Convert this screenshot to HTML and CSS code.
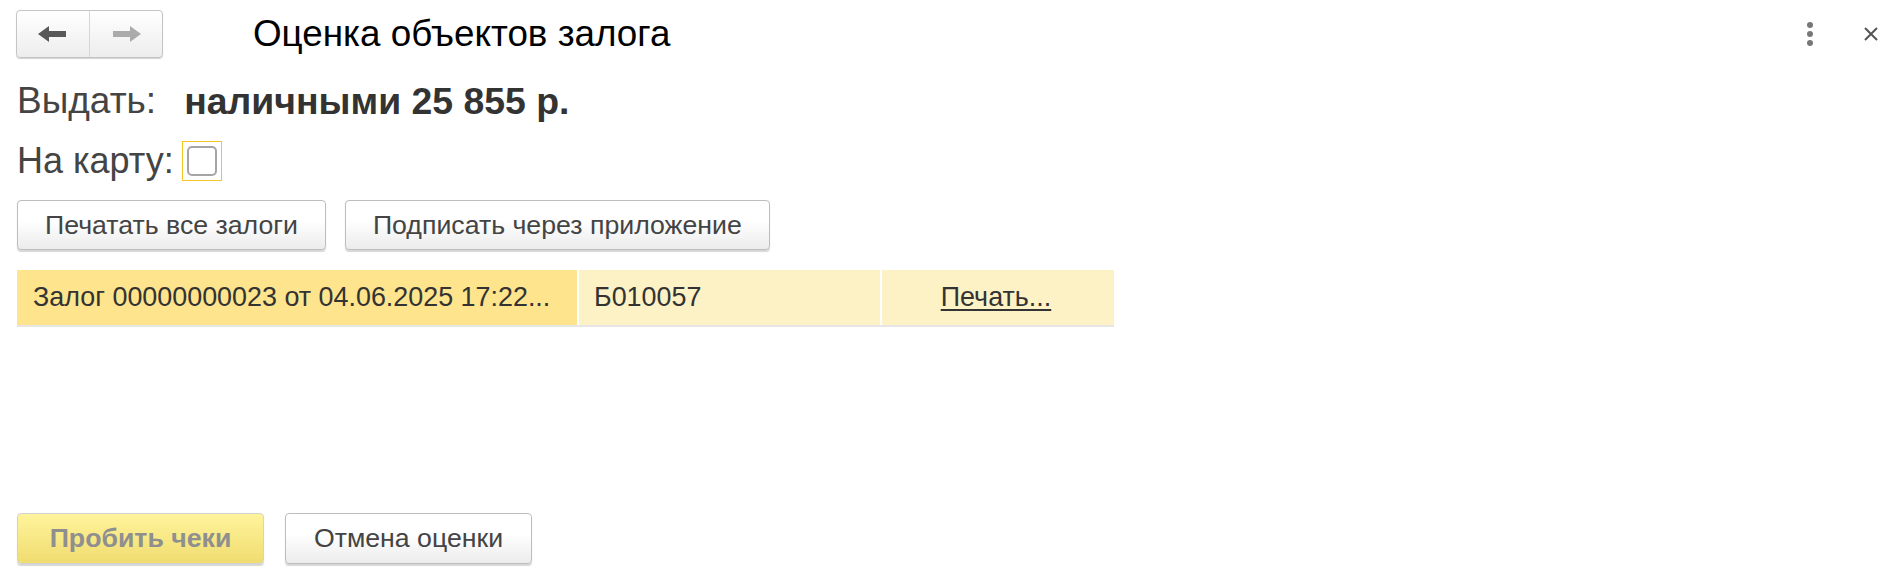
FILE: index.html
```html
<!DOCTYPE html>
<html lang="ru">
<head>
<meta charset="utf-8">
<title>Оценка объектов залога</title>
<link rel="stylesheet" href="styles.css">
</head>
<body>
<div class="form">
  <header class="head">
    <div class="nav">
      <button class="nav-btn" type="button" aria-label="Назад">
        <svg width="30" height="16" viewBox="0 0 30 16"><path d="M0 8 L11 0 L11 5 L28 5 L28 11 L11 11 L11 16 Z" fill="#585858"/></svg>
      </button>
      <span class="nav-sep"></span>
      <button class="nav-btn" type="button" aria-label="Вперёд">
        <svg width="30" height="16" viewBox="0 0 30 16"><path d="M30 8 L19 0 L19 5 L2 5 L2 11 L19 11 L19 16 Z" fill="#ababab"/></svg>
      </button>
    </div>
    <h1 class="title">Оценка объектов залога</h1>
    <div class="tools">
      <span class="tool more">
        <svg width="8" height="26" viewBox="0 0 8 26"><circle cx="4" cy="4" r="3" fill="#777"/><circle cx="4" cy="13" r="3" fill="#777"/><circle cx="4" cy="22" r="3" fill="#777"/></svg>
      </span>
      <span class="tool close">
        <svg width="16" height="16" viewBox="0 0 16 16"><path d="M2 2 L14 14 M14 2 L2 14" stroke="#555" stroke-width="2"/></svg>
      </span>
    </div>
  </header>

  <div class="line issue">
    <span class="label">Выдать:</span>
    <span class="amount">наличными 25 855 р.</span>
  </div>

  <div class="line card">
    <span class="label">На карту:</span>
    <span class="check-frame"><span class="check"></span></span>
  </div>

  <div class="actions">
    <button class="btn" type="button">Печатать все залоги</button>
    <button class="btn" type="button">Подписать через приложение</button>
  </div>

  <div class="table">
    <div class="row">
      <div class="cell c1">Залог 00000000023 от 04.06.2025 17:22...</div>
      <div class="cell c2">Б010057</div>
      <div class="cell c3"><a class="link" href="#">Печать...</a></div>
    </div>
  </div>

  <footer class="footer">
    <button class="btn primary" type="button">Пробить чеки</button>
    <button class="btn" type="button">Отмена оценки</button>
  </footer>
</div>
</body>
</html>
```

FILE: styles.css
```css
* { box-sizing: border-box; }
html, body { margin: 0; padding: 0; background: #fff; }
body {
  font-family: "Liberation Sans", Arial, sans-serif;
  color: #333;
}
.form {
  height: 575px;
  display: flex;
  flex-direction: column;
  padding: 10px 0 11px 17px;
}
.head {
  display: flex;
  align-items: center;
  height: 48px;
}
.nav {
  display: flex;
  width: 147px;
  height: 48px;
  margin-left: -1px;
  border: 1px solid #c4c4c4;
  border-radius: 4px;
  background: linear-gradient(#ffffff, #ededed);
  box-shadow: 0 1px 1px rgba(0,0,0,0.18);
  overflow: hidden;
}
.nav-btn {
  flex: 1;
  border: 0;
  background: transparent;
  padding: 0;
  display: flex;
  align-items: center;
  justify-content: center;
}
.nav-sep { width: 1px; background: #d6d6d6; }
.title {
  margin: 0 0 0 90px;
  font-weight: normal;
  font-size: 36.8px;
  color: #000;
  line-height: 48px;
}
.tools {
  margin-left: auto;
  display: flex;
  align-items: center;
  gap: 49px;
  padding-right: 14px;
}
.tool { display: flex; align-items: center; }
.line {
  display: flex;
  align-items: center;
  font-size: 37px;
  color: #444;
}
.issue { margin-top: 22px; height: 42px; }
.amount {
  margin-left: 28px;
  font-weight: bold;
  font-size: 37.4px;
  color: #333;
}
.card { margin-top: 18px; height: 42px; font-size: 36px; }
.check-frame {
  margin-left: 8px;
  width: 40px;
  height: 40px;
  border: 1px solid #f3c623;
  display: flex;
  align-items: center;
  justify-content: center;
}
.check {
  width: 30px;
  height: 30px;
  border: 2px solid #a5a5a5;
  border-radius: 5px;
  background: #fff;
}
.actions {
  display: flex;
  gap: 19px;
  margin-top: 18px;
}
.btn {
  font-family: inherit;
  font-size: 26.7px;
  color: #444;
  height: 50px;
  padding: 0 27px;
  border: 1px solid #bdbdbd;
  border-radius: 4px;
  background: linear-gradient(#ffffff 40%, #ececec);
  box-shadow: 0 2px 1px rgba(0,0,0,0.16);
}
.table {
  margin-top: 20px;
  width: 1097px;
  border-bottom: 2px solid #e6e6e6;
}
.row {
  display: flex;
  height: 55px;
  font-size: 26.9px;
  color: #333;
}
.cell {
  display: flex;
  align-items: center;
  background: #fdf2c5;
  white-space: nowrap;
}
.c1 { width: 560px; padding-left: 16px; background: #fde48d; }
.c2 { width: 301px; margin-left: 2px; padding-left: 15px; }
.c3 { flex: 1; margin-left: 2px; justify-content: center; padding-right: 4px; }
.link { color: #333; text-decoration: underline; text-underline-offset: 3px; }
.footer {
  margin-top: auto;
  display: flex;
  gap: 21px;
}
.footer .btn { width: 247px; padding: 0; height: 51px; }
.btn.primary {
  font-weight: bold;
  color: #8f8f8f;
  border-color: #d2d2d2;
  background: linear-gradient(#fff49c, #f0dc70);
}
```
